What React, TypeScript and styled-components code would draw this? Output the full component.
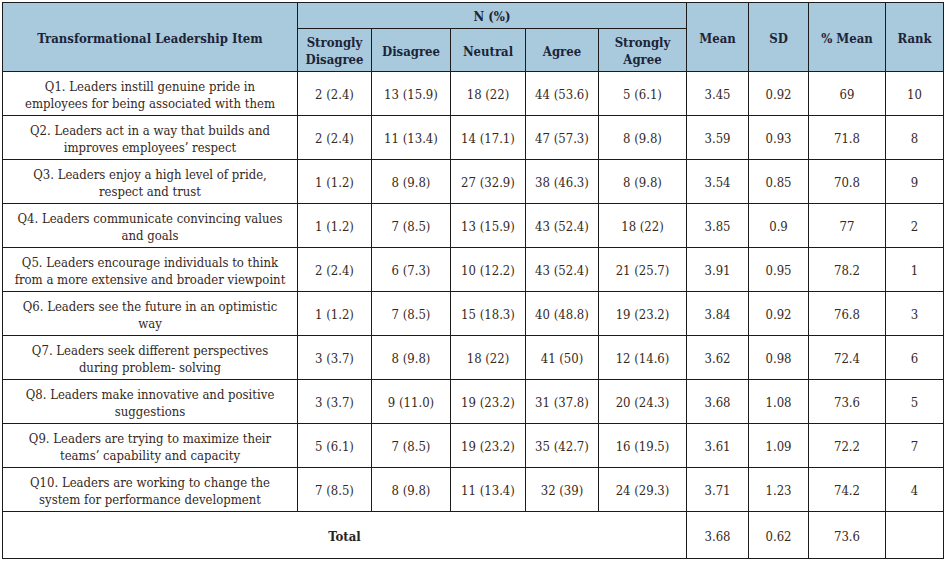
import styled, { createGlobalStyle } from 'styled-components';

const GlobalStyle = createGlobalStyle`
  body {
    margin: 0;
    padding: 2px;
    background: #ffffff;
  }
`;

interface IRow {
  item: string[];
  counts: string[];
  mean: string;
  sd: string;
  pct: string;
  rank: string;
}

const rows: IRow[] = [
  {
    item: ['Q1. Leaders instill genuine pride in', 'employees for being associated with them'],
    counts: ['2 (2.4)', '13 (15.9)', '18 (22)', '44 (53.6)', '5 (6.1)'],
    mean: '3.45',
    sd: '0.92',
    pct: '69',
    rank: '10',
  },
  {
    item: ['Q2. Leaders act in a way that builds and', 'improves employees’ respect'],
    counts: ['2 (2.4)', '11 (13.4)', '14 (17.1)', '47 (57.3)', '8 (9.8)'],
    mean: '3.59',
    sd: '0.93',
    pct: '71.8',
    rank: '8',
  },
  {
    item: ['Q3. Leaders enjoy a high level of pride,', 'respect and trust'],
    counts: ['1 (1.2)', '8 (9.8)', '27 (32.9)', '38 (46.3)', '8 (9.8)'],
    mean: '3.54',
    sd: '0.85',
    pct: '70.8',
    rank: '9',
  },
  {
    item: ['Q4. Leaders communicate convincing values', 'and goals'],
    counts: ['1 (1.2)', '7 (8.5)', '13 (15.9)', '43 (52.4)', '18 (22)'],
    mean: '3.85',
    sd: '0.9',
    pct: '77',
    rank: '2',
  },
  {
    item: ['Q5. Leaders encourage individuals to think', 'from a more extensive and broader viewpoint'],
    counts: ['2 (2.4)', '6 (7.3)', '10 (12.2)', '43 (52.4)', '21 (25.7)'],
    mean: '3.91',
    sd: '0.95',
    pct: '78.2',
    rank: '1',
  },
  {
    item: ['Q6. Leaders see the future in an optimistic', 'way'],
    counts: ['1 (1.2)', '7 (8.5)', '15 (18.3)', '40 (48.8)', '19 (23.2)'],
    mean: '3.84',
    sd: '0.92',
    pct: '76.8',
    rank: '3',
  },
  {
    item: ['Q7. Leaders seek different perspectives', 'during problem- solving'],
    counts: ['3 (3.7)', '8 (9.8)', '18 (22)', '41 (50)', '12 (14.6)'],
    mean: '3.62',
    sd: '0.98',
    pct: '72.4',
    rank: '6',
  },
  {
    item: ['Q8. Leaders make innovative and positive', 'suggestions'],
    counts: ['3 (3.7)', '9 (11.0)', '19 (23.2)', '31 (37.8)', '20 (24.3)'],
    mean: '3.68',
    sd: '1.08',
    pct: '73.6',
    rank: '5',
  },
  {
    item: ['Q9. Leaders are trying to maximize their', 'teams’ capability and capacity'],
    counts: ['5 (6.1)', '7 (8.5)', '19 (23.2)', '35 (42.7)', '16 (19.5)'],
    mean: '3.61',
    sd: '1.09',
    pct: '72.2',
    rank: '7',
  },
  {
    item: ['Q10. Leaders are working to change the', 'system for performance development'],
    counts: ['7 (8.5)', '8 (9.8)', '11 (13.4)', '32 (39)', '24 (29.3)'],
    mean: '3.71',
    sd: '1.23',
    pct: '74.2',
    rank: '4',
  },
];

const colWidths = [295, 74, 79, 75, 73, 88, 62, 60, 77, 58];

const App = () => {
  return (
    <>
      <GlobalStyle />
      <MainTable>
        <colgroup>
          {colWidths.map((w, i) => (
            <col key={i} style={{ width: w }} />
          ))}
        </colgroup>
        <thead>
          <TR $height={26}>
            <TH rowSpan={2}>Transformational Leadership Item</TH>
            <TH colSpan={5}>N (%)</TH>
            <TH rowSpan={2}>Mean</TH>
            <TH rowSpan={2}>SD</TH>
            <TH rowSpan={2}>% Mean</TH>
            <TH rowSpan={2}>Rank</TH>
          </TR>
          <TR $height={43}>
            <TH>
              Strongly
              <br />
              Disagree
            </TH>
            <TH>Disagree</TH>
            <TH>Neutral</TH>
            <TH>Agree</TH>
            <TH>
              Strongly
              <br />
              Agree
            </TH>
          </TR>
        </thead>
        <tbody>
          {rows.map((row, index) => (
            <TR key={`row-${index}`} $height={44}>
              <TD>
                {row.item[0]}
                <br />
                {row.item[1]}
              </TD>
              {row.counts.map((c, i) => (
                <TD key={i}>{c}</TD>
              ))}
              <TD>{row.mean}</TD>
              <TD>{row.sd}</TD>
              <TD>{row.pct}</TD>
              <TD>{row.rank}</TD>
            </TR>
          ))}
          <TR $height={47}>
            <TotalCell colSpan={6}>Total</TotalCell>
            <TD>3.68</TD>
            <TD>0.62</TD>
            <TD>73.6</TD>
            <TD />
          </TR>
        </tbody>
      </MainTable>
    </>
  );
};
export default App;

const MainTable = styled.table`
  font-family: 'DejaVu Serif Condensed', 'DejaVu Serif', 'Liberation Serif', serif;
  border-collapse: collapse;
  table-layout: fixed;
  width: 941px;
  border: 1px solid #1b1b1b;
`;

const TR = styled.tr<{ $height: number }>`
  height: ${(p) => p.$height}px;
`;

const TH = styled.th`
  border: 1px solid #1b1b1b;
  padding: 2px 4px 0;
  background-color: #a9c9dd;
  color: #1c2438;
  font-size: 13px;
  font-weight: bold;
  line-height: 17px;
  text-align: center;
  vertical-align: middle;
`;

const TD = styled.td`
  border: 1px solid #1b1b1b;
  padding: 2px 4px 0;
  color: #35291d;
  font-size: 13px;
  line-height: 17px;
  text-align: center;
  vertical-align: middle;
  white-space: nowrap;
`;

const TotalCell = styled(TD)`
  font-weight: bold;
  color: #2a2420;
`;
